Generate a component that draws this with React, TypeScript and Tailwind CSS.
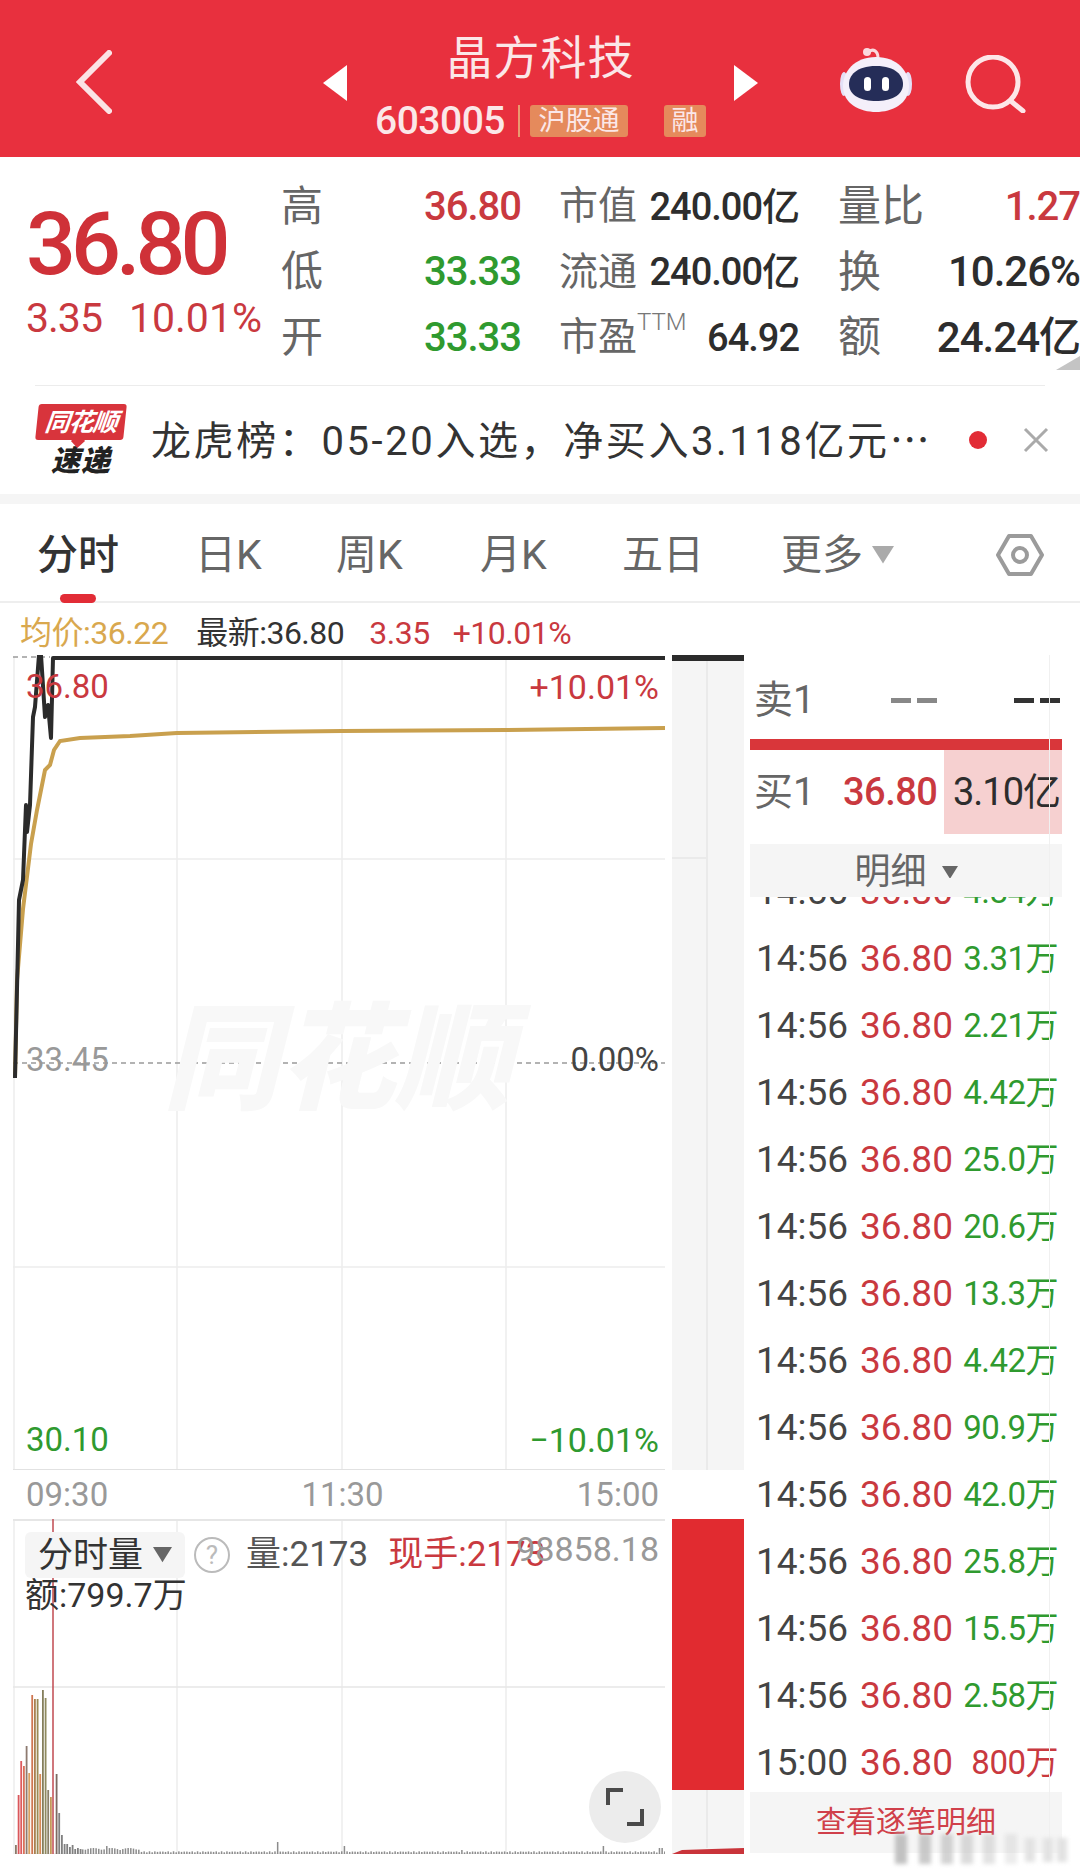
const ticks = [
  { time: "14:56", vol: "4.84万" },
  { time: "14:56", vol: "3.31万" },
  { time: "14:56", vol: "2.21万" },
  { time: "14:56", vol: "4.42万" },
  { time: "14:56", vol: "25.0万" },
  { time: "14:56", vol: "20.6万" },
  { time: "14:56", vol: "13.3万" },
  { time: "14:56", vol: "4.42万" },
  { time: "14:56", vol: "90.9万" },
  { time: "14:56", vol: "42.0万" },
  { time: "14:56", vol: "25.8万" },
  { time: "14:56", vol: "15.5万" },
  { time: "14:56", vol: "2.58万" },
  { time: "15:00", vol: "800万", up: true },
];

// x, height, colour of the opening bars, read off the picture
const openBars: [number, number, string][] = [
  [15, 9, "#8a7a6a"], [17.7, 59, "#d9565a"], [20.3, 93, "#dd5a5e"], [23, 88, "#d9705a"],
  [25.7, 108, "#8d7a70"], [28.3, 81, "#d9a060"], [31.3, 159, "#cf7550"], [34, 155, "#a8804f"],
  [36.7, 155, "#9a8a55"], [39.3, 80, "#d88a55"], [42, 164, "#857f5c"], [44.7, 156, "#8f8a5f"],
  [47.3, 64, "#8a8068"], [50, 57, "#c49a5a"], [55.7, 80, "#7d6a62"], [58.3, 41, "#808080"],
  [61, 19, "#808080"], [63.7, 10, "#808080"], [66.3, 10, "#808080"], [69, 7, "#808080"],
  [71.7, 9, "#808080"], [74.3, 5, "#808080"], [77, 6, "#808080"], [79.7, 5, "#808080"],
];

const spikes: Record<number, number> = { 107: 8, 278: 12, 343: 8, 460: 4, 603: 8, 660: 6 };

const tailBars: { x: number; h: number }[] = [];
for (let x = 82; x < 665; x += 2.67) {
  const spike = Object.keys(spikes).find((k) => Math.abs(Number(k) - x) < 1.4);
  const base = x < 140 ? 4 + Math.abs(Math.sin(x)) * 2 : 1.5 + Math.abs(Math.sin(x * 1.7)) * 1.2;
  tailBars.push({ x, h: spike ? spikes[Number(spike)] : base });
}

function Chevron() {
  return (
    <svg width="36" height="64" viewBox="0 0 36 64" fill="none" className="mt-[7px] shrink-0">
      <path d="M33 3 L4 32 L33 61" stroke="#fbe3e5" strokeWidth="6" strokeLinecap="round" strokeLinejoin="miter" />
    </svg>
  );
}

function Robot() {
  return (
    <svg width="72" height="68" viewBox="0 0 72 68" className="shrink-0">
      <path d="M29 6 C33 2 38 5 38 12" stroke="#fbd9de" strokeWidth="3" fill="none" />
      <circle cx="27" cy="6" r="4" fill="#fbd9de" />
      <ellipse cx="4" cy="38" rx="4" ry="12" fill="#e4e0f6" />
      <ellipse cx="68" cy="38" rx="4" ry="12" fill="#e4e0f6" />
      <path d="M36 11 C58 11 69 26 69 40 C69 58 52 66 36 66 C20 66 3 58 3 40 C3 26 14 11 36 11 Z" fill="#f4effa" />
      <path d="M36 20 C56 20 63 30 63 38 C63 50 50 55 36 55 C22 55 9 50 9 38 C9 30 16 20 36 20 Z" fill="#252d58" />
      <rect x="24" y="31" width="7" height="14" rx="3.5" fill="#fff" />
      <rect x="42" y="31" width="7" height="14" rx="3.5" fill="#fff" />
    </svg>
  );
}

function Search() {
  return (
    <svg width="62" height="58" viewBox="0 0 62 58" fill="none" className="shrink-0">
      <circle cx="28" cy="27" r="25" stroke="#fde6e8" strokeWidth="5" />
      <path d="M47 47 L58 56" stroke="#fde6e8" strokeWidth="5" strokeLinecap="round" />
    </svg>
  );
}

function Triangle({ dir }: { dir: "left" | "right" }) {
  return (
    <svg width="24" height="36" viewBox="0 0 24 36" className="shrink-0">
      <path d={dir === "left" ? "M24 0 L24 36 L0 18 Z" : "M0 0 L0 36 L24 18 Z"} fill="#fff" />
    </svg>
  );
}

function Caret({ size = 20, color = "#777" }: { size?: number; color?: string }) {
  return (
    <svg width={size} height={size * 0.8} viewBox="0 0 20 16" className="shrink-0">
      <path d="M0 0 H20 L10 16 Z" fill={color} />
    </svg>
  );
}

function NewsLogo() {
  return (
    <div className="flex w-[92px] shrink-0 flex-col items-center">
      <div className="relative flex h-[36px] w-[88px] -skew-x-6 items-center justify-center rounded-[3px] bg-[#d8343c]">
        <span className="text-[25px] leading-none font-bold text-white italic tracking-[-1px]">同花顺</span>
        <span className="absolute -bottom-[6px] left-[38px] h-[10px] w-[10px] rotate-45 bg-[#d8343c]" />
      </div>
      <span className="mt-[5px] text-[29px] leading-[32px] font-black text-[#222] italic tracking-[1px]">速递</span>
    </div>
  );
}

function StatRow({ label, value, valueClass, labelClass = "text-[42px]" }: { label: React.ReactNode; value: string; valueClass: string; labelClass?: string }) {
  return (
    <div className="flex h-[65.5px] items-center justify-between">
      <span className={`whitespace-nowrap leading-none text-[#666] ${labelClass}`}>{label}</span>
      <span className={`whitespace-nowrap leading-none ${valueClass}`}>{value}</span>
    </div>
  );
}

const redNum = "text-[40px] font-medium tracking-[-1px] text-[#c9393f]";
const greenNum = "text-[40px] font-medium tracking-[-1px] text-[#2f9a2f]";
const darkNum = "text-[38px] font-medium tracking-[-1px] text-[#2d2d2d]";
const darkNumBig = "text-[42px] font-medium tracking-[-1px] text-[#2d2d2d]";

function MainChart() {
  return (
    <svg className="absolute inset-0" width="652" height="815" viewBox="13 655 652 815" fill="none">
      {[177, 342, 506].map((x) => (
        <line key={x} x1={x} x2={x} y1="657" y2="1470" stroke="#ececec" strokeWidth="1.5" />
      ))}
      <line x1="14" x2="14" y1="657" y2="1470" stroke="#ececec" strokeWidth="1.5" />
      <line x1="13" x2="665" y1="859" y2="859" stroke="#ececec" strokeWidth="1.5" />
      <line x1="13" x2="665" y1="1267" y2="1267" stroke="#ececec" strokeWidth="1.5" />
      <line x1="13" x2="665" y1="1470" y2="1470" stroke="#e2e2e2" strokeWidth="2" />
      <line x1="13" x2="665" y1="1063" y2="1063" stroke="#9a9a9a" strokeWidth="1.5" strokeDasharray="5 4" />
      <line x1="13" x2="50" y1="657" y2="657" stroke="#9a9a9a" strokeWidth="1.5" strokeDasharray="5 4" />
      <path
        d="M15 1078 L17 980 L23 909 L31 844 L37 810 L45 770 L50 765 L54 750 L60 741 L80 738 L130 736 L177 733 L342 731 L506 730 L665 728"
        stroke="#c9a04e"
        strokeWidth="4"
      />
      <path
        d="M15 1078 L19 900 L23 880 L26 805 L27 832 L30 805 L33 717 L35 707 L39 655 L41 655 L45 717 L48 705 L51 738 L53 658 L665 658"
        stroke="#2b2b2b"
        strokeWidth="4"
        strokeLinejoin="round"
      />
    </svg>
  );
}

function VolumeChart() {
  return (
    <svg className="absolute inset-0" width="652" height="335" viewBox="13 1519 652 335" fill="none">
      {[177, 342, 506].map((x) => (
        <line key={x} x1={x} x2={x} y1="1519" y2="1854" stroke="#ececec" strokeWidth="1.5" />
      ))}
      <line x1="14" x2="14" y1="1519" y2="1854" stroke="#ececec" strokeWidth="1.5" />
      <line x1="13" x2="665" y1="1520" y2="1520" stroke="#e6e6e6" strokeWidth="2" />
      <line x1="13" x2="665" y1="1687" y2="1687" stroke="#e6e6e6" strokeWidth="1.5" />
      <line x1="13" x2="665" y1="1854" y2="1854" stroke="#ececec" strokeWidth="1.5" />
      {openBars.map(([x, h, color]) => (
        <rect key={x} x={x} y={1854 - h} width="1.8" height={h} fill={color} />
      ))}
      {tailBars.map((b) => (
        <rect key={b.x} x={b.x} y={1854 - b.h} width="1.5" height={b.h} fill="#8c8c8c" />
      ))}
      <line x1="53" x2="53" y1="1519" y2="1854" stroke="#c04a50" strokeWidth="1.5" />
    </svg>
  );
}

export default function App() {
  return (
    <div className="relative h-[1876px] w-[1080px] overflow-hidden bg-white [font-family:Roboto,'Noto_Sans_CJK_SC',sans-serif]">
      {/* header */}
      <div className="flex h-[157px] items-center bg-[#e8303e] pl-[76px]">
        <Chevron />
        <div className="ml-[211px] mt-[9px]">
          <Triangle dir="left" />
        </div>
        <div className="flex w-[387px] flex-col items-center pt-[9px]">
          <div className="h-[60px] text-[46px] leading-[60px] tracking-[1px] text-[#fbe7e8]">晶方科技</div>
          <div className="mt-[16px] flex h-[34px] items-center text-[#fbe7e8]">
            <span className="text-[39px] font-medium tracking-[-0.5px]">603005</span>
            <span className="ml-[13px] h-[32px] w-[2px] bg-[#e99a70]" />
            <span className="ml-[10px] flex h-[32px] w-[98px] items-center justify-center rounded-[3px] bg-[#e58a5c] text-[27px]">沪股通</span>
            <span className="ml-[36px] flex h-[32px] w-[42px] items-center justify-center rounded-[3px] bg-[#e58a5c] text-[27px]">融</span>
          </div>
        </div>
        <div className="mt-[9px]">
          <Triangle dir="right" />
        </div>
        <div className="ml-[82px] mt-[3px]">
          <Robot />
        </div>
        <div className="ml-[53px] mt-[11px]">
          <Search />
        </div>
      </div>

      {/* quote */}
      <div className="relative flex h-[228px] pt-[17px]">
        <div className="w-[281px] pl-[26px] pt-[26px]">
          <div className="text-[88px] leading-[88px] font-medium tracking-[-5px] text-[#cf3138]">36.80</div>
          <div className="mt-[10px] flex text-[41px] leading-[40px] text-[#c9393f]">
            <span className="tracking-[-1px]">3.35</span>
            <span className="ml-[27px]">10.01%</span>
          </div>
        </div>
        <div className="w-[240px]">
          <StatRow label="高" value="36.80" valueClass={redNum} />
          <StatRow label="低" value="33.33" valueClass={greenNum} />
          <StatRow label="开" value="33.33" valueClass={greenNum} />
        </div>
        <div className="ml-[38px] w-[240px]">
          <StatRow label="市值" value="240.00亿" valueClass={darkNum} labelClass="text-[39px]" />
          <StatRow label="流通" value="240.00亿" valueClass={darkNum} labelClass="text-[39px]" />
          <StatRow
            label={
              <>
                市盈<sup className="align-[8px] text-[24px] font-light text-[#777]">TTM</sup>
              </>
            }
            value="64.92"
            valueClass={darkNum}
            labelClass="text-[39px]"
          />
        </div>
        <div className="ml-[39px] w-[242px]">
          <StatRow label="量比" value="1.27" valueClass={redNum} labelClass="text-[43px]" />
          <StatRow label="换" value="10.26%" valueClass={darkNumBig} labelClass="text-[43px]" />
          <StatRow label="额" value="24.24亿" valueClass={darkNumBig} labelClass="text-[43px]" />
        </div>
        <svg width="24" height="14" viewBox="0 0 24 14" className="absolute right-0 bottom-[15px]">
          <path d="M24 0 V14 H0 Z" fill="#c4c4c4" />
        </svg>
      </div>

      {/* news ticker */}
      <div className="mx-[35px] h-[1px] w-[1010px] bg-[#ececec]" />
      <div className="flex h-[108px] items-center pl-[35px]">
        <NewsLogo />
        <span className="ml-[24px] mt-[3px] whitespace-nowrap text-[40px] leading-none tracking-[2.6px] text-[#333]">龙虎榜：05-20入选，净买入3.118亿元⋯</span>
        <span className="ml-[37px] h-[18px] w-[18px] rounded-full bg-[#e22c36]" />
        <svg width="26" height="26" viewBox="0 0 26 26" className="ml-[36px]" fill="none">
          <path d="M2 2 L24 24 M24 2 L2 24" stroke="#aaa" strokeWidth="3" />
        </svg>
      </div>
      <div className="h-[10px] bg-[#f5f5f5]" />

      {/* tabs */}
      <div className="relative flex h-[99px] items-center border-b-2 border-[#eeeeee] pl-[37px] pt-[5px] text-[41px] leading-none text-[#666]">
        <div className="w-[158px] font-medium text-[#333]">分时</div>
        <div className="w-[141px]">日K</div>
        <div className="w-[144px]">周K</div>
        <div className="w-[142px]">月K</div>
        <div className="w-[159px]">五日</div>
        <div className="flex w-[299px] items-center whitespace-nowrap">
          更多
          <span className="ml-[9px]">
            <Caret size={22} color="#aaa" />
          </span>
          <svg width="48" height="44" viewBox="0 0 48 44" fill="none" className="ml-[102px] shrink-0">
            <path d="M13 3 H35 L46 22 L35 41 H13 L2 22 Z" stroke="#9b9b9b" strokeWidth="4" strokeLinejoin="round" />
            <circle cx="24" cy="22" r="7" stroke="#9b9b9b" strokeWidth="4" />
          </svg>
        </div>
        <span className="absolute -bottom-[2px] left-[60px] h-[9px] w-[36px] rounded-full bg-[#e22c36]" />
      </div>

      {/* price line */}
      <div className="flex h-[52px] items-center pl-[20px] pt-[8px] text-[32px] leading-none tracking-[-0.5px]">
        <span className="text-[#d9a84e]">均价:36.22</span>
        <span className="ml-[28px] text-[#333]">最新:36.80</span>
        <span className="ml-[25px] text-[#c9393f]">3.35</span>
        <span className="ml-[23px] text-[#c9393f]">+10.01%</span>
      </div>

      <div className="flex">
        {/* charts */}
        <div className="w-[750px] shrink-0 pl-[13px]">
          <div className="flex h-[815px]">
            <div className="relative w-[652px] shrink-0">
              <MainChart />
              <div className="absolute top-[345px] left-[150px] text-[116px] leading-[120px] font-black text-[#f8f8f8] italic">同花顺</div>
              <span className="absolute top-[14px] left-[13px] text-[33px] leading-[36px] text-[#c9393f]">36.80</span>
              <span className="absolute top-[14px] right-[6px] text-[34px] leading-[36px] text-[#c9393f]">+10.01%</span>
              <span className="absolute top-[387px] left-[13px] text-[33px] leading-[36px] text-[#999]">33.45</span>
              <span className="absolute top-[387px] right-[6px] text-[33px] leading-[36px] text-[#444]">0.00%</span>
              <span className="absolute top-[767px] left-[13px] text-[33px] leading-[36px] text-[#2f9a2f]">30.10</span>
              <span className="absolute top-[767px] right-[6px] text-[34px] leading-[36px] text-[#2f9a2f]">−10.01%</span>
            </div>
            <div className="ml-[7px] flex w-[72px] flex-col border-t-[6px] border-[#2b2b2b] bg-[#f5f5f5]">
              <div className="h-[198px] w-[36px] border-r-2 border-b-2 border-[#eaeaea]" />
              <div className="flex-1 w-[36px] border-r-2 border-[#eaeaea]" />
            </div>
          </div>

          <div className="flex h-[49px] w-[652px] items-center justify-between pr-[6px] pl-[13px] text-[33px] leading-none text-[#999]">
            <span>09:30</span>
            <span>11:30</span>
            <span>15:00</span>
          </div>

          <div className="flex h-[335px]">
            <div className="relative w-[652px] shrink-0">
              <VolumeChart />
              <div className="relative flex items-start pt-[13px] pl-[12px]">
                <div className="flex h-[46px] w-[160px] items-center rounded-[6px] bg-[#f5f5f5] pl-[13px] text-[35px] leading-none text-[#333]">
                  分时量
                  <span className="ml-[10px]">
                    <Caret size={19} color="#666" />
                  </span>
                </div>
                <span className="ml-[9px] mt-[5px] flex h-[36px] w-[36px] items-center justify-center rounded-full border-2 border-[#bbb] text-[26px] leading-none text-[#bbb]">?</span>
                <span className="ml-[16px] mt-[3px] text-[35px] leading-[40px] text-[#555]">量:2173</span>
                <span className="ml-[20px] mt-[3px] text-[35px] leading-[40px] text-[#c9393f]">现手:2173</span>
              </div>
              <span className="absolute top-[10px] right-[6px] text-[34px] leading-[40px] text-[#999]">98858.18</span>
              <div className="relative -mt-[2px] pl-[12px] text-[34px] leading-[38px] text-[#333]">额:799.7万</div>
              <div className="absolute top-[252px] left-[576px] flex h-[72px] w-[72px] items-center justify-center rounded-full bg-[#ececec]">
                <svg width="40" height="40" viewBox="0 0 40 40" fill="none">
                  <path d="M3 18 V3 H18 M37 22 V37 H22" stroke="#4a4a4a" strokeWidth="4" />
                </svg>
              </div>
            </div>
            <div className="ml-[7px] flex w-[72px] flex-col bg-[#f5f5f5]">
              <div className="h-[271px] bg-[#e12b30]" />
              <div className="flex-1 w-[36px] border-r-2 border-[#eaeaea]" />
              <svg width="72" height="6" viewBox="0 0 72 6" className="block">
                <path d="M0 6 L10 2 L40 1 L72 0 V6 Z" fill="#c9343a" />
              </svg>
            </div>
          </div>
        </div>

        {/* order book and ticks */}
        <div className="relative flex h-[1197px] w-[312px] shrink-0 flex-col">
          <div className="flex h-[84px] items-center pt-[6px] pl-[4px] text-[39px] leading-none text-[#666]">
            <span className="w-[137px]">卖1</span>
            <span className="flex gap-[6px]">
              <span className="h-[5px] w-[20px] bg-[#888]" />
              <span className="h-[5px] w-[20px] bg-[#888]" />
            </span>
            <span className="ml-[77px] flex gap-[6px]">
              <span className="h-[5px] w-[20px] bg-[#333]" />
              <span className="h-[5px] w-[20px] bg-[#333]" />
            </span>
          </div>
          <div className="h-[11px] bg-[#d9363a]" />
          <div className="flex h-[84px] items-center">
            <span className="w-[93px] pl-[4px] text-[39px] leading-none text-[#666]">买1</span>
            <span className="w-[101px] text-[38px] leading-none font-medium tracking-[-0.5px] text-[#c9393f]">36.80</span>
            <span className="flex h-full w-[118px] items-center justify-end bg-[#f6d0d0] pr-[2px] text-[38px] leading-none tracking-[-1px] text-[#2d2d2d]">3.10亿</span>
          </div>
          <div className="mt-[10px] flex h-[53px] shrink-0 items-center justify-center bg-[#f5f5f5] pt-[3px] text-[36px] leading-none text-[#666]">
            明细
            <span className="ml-[15px]">
              <Caret size={16} color="#666" />
            </span>
          </div>
          <div className="h-[893px] overflow-hidden">
            <div className="-mt-[39px]">
              {ticks.map((t, i) => (
                <div key={i} className="flex h-[67px] items-center pl-[6px] text-[37px] leading-none whitespace-nowrap">
                  <span className="w-[104px] text-[#444]">{t.time}</span>
                  <span className="w-[94px] text-[#c9393f]">36.80</span>
                  <span className={`w-[104px] text-right text-[33px] tracking-[-0.5px] ${t.up ? "text-[#c9393f]" : "text-[#2f9a2f]"}`}>{t.vol}</span>
                </div>
              ))}
            </div>
          </div>
          <div className="absolute top-[1137px] h-[61px] w-[312px] bg-[#f5f5f5] text-center text-[30px] leading-[60px] text-[#d0404a]">查看逐笔明细</div>
          <span className="absolute top-[0px] right-[12px] h-[1197px] w-[1px] bg-[#f0f0f0]" />
        </div>
      </div>

      {/* blurred corner watermark */}
      <svg width="190" height="36" viewBox="0 0 190 36" className="absolute top-[1832px] left-[885px] blur-[2px]">
        {[10, 34, 56, 76, 98, 120].map((x) => (
          <rect key={x} x={x} y="2" width="12" height="30" fill="#bdbdbd" opacity={1 - x / 170} />
        ))}
        {[140, 158, 172].map((x) => (
          <rect key={x} x={x} y="6" width="10" height="24" fill="#e2e2e2" />
        ))}
      </svg>
    </div>
  );
}
